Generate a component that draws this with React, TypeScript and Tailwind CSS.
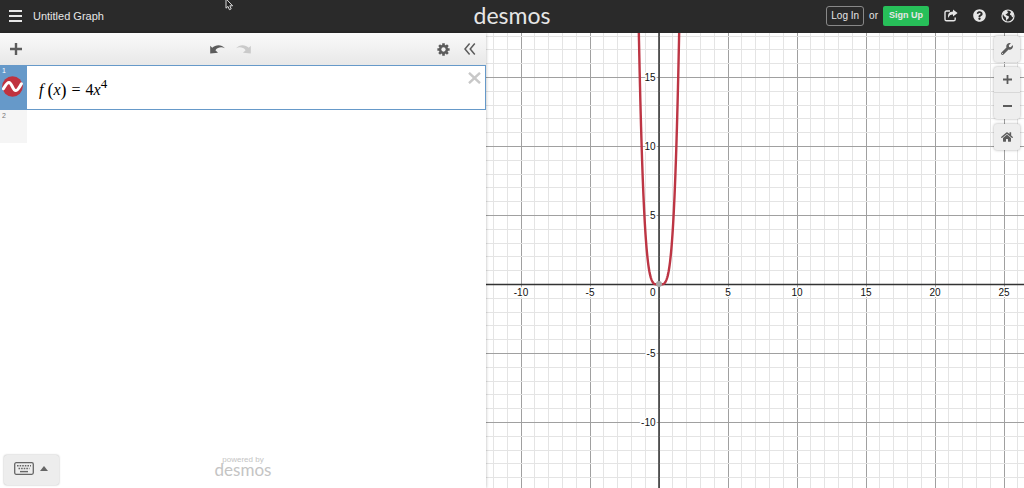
import type { ReactNode } from "react";
import { FaHome, FaQuestionCircle, FaWrench } from "react-icons/fa";

const UNIT = 13.8;
const VIEW = { width: 538, height: 455, originX: 172.5, originY: 251 };

const toX = (x: number) => VIEW.originX + x * UNIT;
const toY = (y: number) => VIEW.originY - y * UNIT;

function range(from: number, to: number) {
  return Array.from({ length: to - from + 1 }, (_, i) => from + i);
}

const COLUMNS = range(-12, 26);
const ROWS = range(-14, 18);
const X_LABELS = [-10, -5, 5, 10, 15, 20, 25];
const Y_LABELS = [15, 10, 5, -5, -10];

const CURVE = range(-60, 60)
  .map((i) => {
    const x = i / 40;
    return `${toX(x).toFixed(2)},${toY(4 * x ** 4).toFixed(2)}`;
  })
  .join(" ");

function MenuIcon() {
  return (
    <svg width="14" height="12" viewBox="0 0 14 12" fill="currentColor" aria-hidden="true">
      <rect y="0" width="13" height="2" />
      <rect y="5" width="13" height="2" />
      <rect y="10" width="13" height="2" />
    </svg>
  );
}

function ShareIcon() {
  return (
    <svg width="14" height="13" viewBox="0 0 14 13" aria-hidden="true">
      <path
        d="M6 2H2.6Q1 2 1 3.6v6.6q0 1.6 1.6 1.6h7q1.6 0 1.6-1.6V8.4"
        fill="none"
        stroke="currentColor"
        strokeWidth="1.4"
      />
      <path d="M9 .4 13.6 4 9 7.6V5.4C6.6 5.3 5.2 6.2 4.4 9 3.2 5 5.4 2.7 9 2.6Z" fill="currentColor" />
    </svg>
  );
}

function GlobeIcon() {
  return (
    <svg width="14" height="14" viewBox="0 0 14 14" aria-hidden="true">
      <circle cx="7" cy="7" r="6" fill="none" stroke="currentColor" strokeWidth="1.2" />
      <path
        d="M2 3.6 4.6 1.4 6.8 1.8 6.2 3 7.4 3.6 5.8 4.8 4.4 5.8 5.8 6.6 8 7.6 7.6 9.2 6.2 10.4 5.8 12.2 5 10.2 4.8 8.4 3 7 2 5.2Z M9.2 1.6 11.4 3 12.6 5.4 12.4 7.6 11.2 8.4 10.4 6.6 9 5.8 9.2 4.2 10 3.4Z"
        fill="currentColor"
      />
    </svg>
  );
}

function PlusIcon({ size }: { size: number }) {
  return (
    <svg width={size} height={size} viewBox="0 0 12 12" aria-hidden="true">
      <path d="M6 0v12M0 6h12" stroke="currentColor" strokeWidth="2.4" />
    </svg>
  );
}

function UndoIcon({ flipped = false }: { flipped?: boolean }) {
  return (
    <svg
      width="15"
      height="9"
      viewBox="0 0 15 9"
      fill="currentColor"
      className={flipped ? "-scale-x-100" : ""}
      aria-hidden="true"
    >
      <path d="M.2.8 2.2 2.8C5.6-.6 11.6-.8 14.9 3.2 11.4 1.6 7.8 2.2 5.4 5.2L8 7.8.2 8.6Z" />
    </svg>
  );
}

function GearIcon() {
  return (
    <svg width="13" height="13" viewBox="0 0 14 14" aria-hidden="true">
      <g stroke="currentColor" strokeWidth="2.8">
        <path d="M7 .4v13.2M.4 7h13.2M2.3 2.3l9.4 9.4M11.7 2.3l-9.4 9.4" />
      </g>
      <circle cx="7" cy="7" r="5" fill="currentColor" />
      <circle cx="7" cy="7" r="2.3" fill="#f2f2f2" />
    </svg>
  );
}

function CollapseIcon() {
  return (
    <svg width="12" height="12" viewBox="0 0 12 12" aria-hidden="true">
      <path
        d="M5.6.6 1 6l4.6 5.4M10.8.6 6.2 6l4.6 5.4"
        fill="none"
        stroke="currentColor"
        strokeWidth="1.5"
      />
    </svg>
  );
}

function CurveIcon() {
  return (
    <svg width="21" height="21" viewBox="0 0 21 21" aria-hidden="true">
      <circle cx="10.5" cy="10.5" r="10.3" fill="#c0323f" />
      <path
        d="M1.4 12.8C3.2 9.8 4.8 6.4 7 6.4 9.6 6.6 11 14.6 13.6 14.6 15.8 14.6 17.4 11 19.4 7.8"
        fill="none"
        stroke="#fff"
        strokeWidth="3"
        strokeLinecap="round"
      />
    </svg>
  );
}

function KeyboardIcon() {
  return (
    <svg width="20" height="13" viewBox="0 0 20 13" aria-hidden="true">
      <rect x=".7" y=".7" width="18.6" height="11.6" rx="1.5" fill="none" stroke="currentColor" strokeWidth="1.3" />
      <path
        d="M3 3.8h14M4.5 6.5h11"
        stroke="currentColor"
        strokeWidth="1.5"
        strokeDasharray="1.6 1"
      />
      <path d="M6 9.6h8" stroke="currentColor" strokeWidth="1.4" />
    </svg>
  );
}

function Pointer() {
  return (
    <svg
      width="9"
      height="13"
      viewBox="0 0 9 13"
      className="pointer-events-none absolute -top-[2px] left-[225px]"
      aria-hidden="true"
    >
      <path
        d="M1 .8v9.4l2-1.8 1.4 3.3 1.8-.8-1.4-3.1h2.8Z"
        fill="#222"
        stroke="#ddd"
        strokeWidth="1"
      />
    </svg>
  );
}

function Header() {
  return (
    <header className="relative flex h-[33px] shrink-0 items-center justify-between bg-[#2a2a2a] pr-[9px] pb-[2px] pl-[9px] text-[#e6e6e6]">
      <div className="flex flex-1 items-center gap-[10px]">
        <button type="button" aria-label="Open menu">
          <MenuIcon />
        </button>
        <span className="text-[11px] leading-4">Untitled Graph</span>
      </div>
      <a href="#home" className="pb-[2px] font-[Lato,sans-serif] text-[23px] leading-6">
        desmos
      </a>
      <div className="flex flex-1 items-center justify-end text-[10px]">
        <button type="button" className="h-5 rounded-[3px] border border-[#888] px-1">
          Log In
        </button>
        <span className="mx-[5px]">or</span>
        <button type="button" className="h-5 rounded-[2px] bg-[#27bf59] px-[6px] text-[9px] font-bold">
          Sign Up
        </button>
        <div className="ml-[15px] flex items-center gap-[15px]">
          <button type="button" aria-label="Share graph">
            <ShareIcon />
          </button>
          <button type="button" aria-label="Help">
            <FaQuestionCircle size={13} />
          </button>
          <button type="button" aria-label="Language">
            <GlobeIcon />
          </button>
        </div>
      </div>
      <Pointer />
    </header>
  );
}

function Toolbar() {
  return (
    <div className="flex h-8 shrink-0 items-center bg-linear-to-b from-[#fafafa] to-[#e8e8e8] px-[10px] text-[#5c5c5c]">
      <div className="flex flex-1">
        <button type="button" aria-label="Add item">
          <PlusIcon size={12} />
        </button>
      </div>
      <div className="mr-[26px] flex items-center gap-[11px]">
        <button type="button" aria-label="Undo">
          <UndoIcon />
        </button>
        <button type="button" aria-label="Redo" disabled className="text-[#cacaca]">
          <UndoIcon flipped />
        </button>
      </div>
      <div className="flex flex-1 items-center justify-end gap-[14px]">
        <button type="button" aria-label="Edit list">
          <GearIcon />
        </button>
        <button type="button" aria-label="Hide list">
          <CollapseIcon />
        </button>
      </div>
    </div>
  );
}

function Expressions() {
  return (
    <ol className="flex-1">
      <li className="flex h-[45px] bg-[#6699c9] py-px pr-px">
        <div className="w-[27px] shrink-0 pl-[2px] text-[7px] leading-[10px] text-white">
          <span className="block">1</span>
          <button type="button" aria-label="Hide curve" className="block">
            <CurveIcon />
          </button>
        </div>
        <div
          role="textbox"
          tabIndex={0}
          aria-label="Expression 1"
          className="flex flex-1 items-center bg-white pt-1 pl-3 font-['Liberation_Serif',serif] text-[16px] leading-5 text-black"
        >
          <i>f</i>
          <span className="ml-1 text-[18px]">(</span>
          <i>x</i>
          <span className="text-[18px]">)</span>
          <span className="mx-[5px]">=</span>
          <span>4</span>
          <i>x</i>
          <sup className="-top-[6px] text-[13px]">4</sup>
        </div>
        <button
          type="button"
          aria-label="Delete expression 1"
          className="flex bg-white pt-[6px] pr-1 text-[#c8c8c8]"
        >
          <svg width="13" height="12" viewBox="0 0 13 12" aria-hidden="true">
            <path d="M1 .8l11 10.4M12 .8 1 11.2" stroke="currentColor" strokeWidth="2.4" />
          </svg>
        </button>
      </li>
      <li className="flex h-[33px]">
        <div className="w-[27px] bg-[#f5f5f5] pl-[2px] text-[7px] leading-[11px] text-[#777]">2</div>
      </li>
    </ol>
  );
}

function ExpressionPanel() {
  return (
    <section
      className="relative z-10 flex w-[486px] shrink-0 flex-col bg-white shadow-[0_0_3px_rgba(0,0,0,0.3)]"
      aria-label="Expressions"
    >
      <Toolbar />
      <Expressions />
      <footer className="grid grid-cols-3 items-end pb-[3px]">
        <button
          type="button"
          aria-label="Show keypad"
          className="ml-1 flex h-[30px] w-[55px] items-center justify-center gap-[6px] rounded-[3px] bg-[#ededed] pr-[2px] pb-1 text-[#666] shadow-[0_0_2px_rgba(0,0,0,0.35)]"
        >
          <KeyboardIcon />
          <svg width="8" height="5" viewBox="0 0 8 5" fill="currentColor" aria-hidden="true">
            <path d="M4 0l4 5H0Z" />
          </svg>
        </button>
        <div className="flex flex-col items-center pb-[9px] text-[#c4c4c4]">
          <span className="text-[8px] leading-[9px]">powered by</span>
          <span className="font-[Lato,sans-serif] text-[17px] leading-3">desmos</span>
        </div>
      </footer>
    </section>
  );
}

function Graph() {
  return (
    <svg
      viewBox={`0 0 ${VIEW.width} ${VIEW.height}`}
      preserveAspectRatio="xMidYMid slice"
      className="block h-full w-full"
      role="img"
      aria-label="Graph of f(x) = 4x^4"
    >
      <g shapeRendering="crispEdges">
        {COLUMNS.map((c) => (
          <rect
            key={c}
            x={Math.round(toX(c))}
            width="1"
            height={VIEW.height}
            fill={c % 5 === 0 ? "#a0a0a0" : "#e4e4e4"}
          />
        ))}
        {ROWS.map((r) => (
          <rect
            key={r}
            y={Math.round(toY(r))}
            width={VIEW.width}
            height="1"
            fill={r % 5 === 0 ? "#a0a0a0" : "#e4e4e4"}
          />
        ))}
      </g>
      <path
        d={`M${VIEW.originX + 0.5} 0V${VIEW.height}M0 ${VIEW.originY + 0.5}H${VIEW.width}`}
        stroke="#333"
        strokeWidth="1.5"
      />
      <polyline points={CURVE} fill="none" stroke="#bd3544" strokeWidth="2.4" transform="translate(.5 .5)" />
      <circle cx={VIEW.originX + 0.5} cy={VIEW.originY} r="3" fill="#a6a6a6" />
      <g
        fontSize="10"
        fill="#111"
        stroke="#fff"
        strokeWidth="3"
        strokeLinejoin="round"
        paintOrder="stroke"
      >
        {X_LABELS.map((n) => (
          <text key={n} x={Math.round(toX(n))} y={VIEW.originY + 12} textAnchor="middle">
            {n}
          </text>
        ))}
        <text x={VIEW.originX - 3} y={VIEW.originY + 12} textAnchor="end">
          0
        </text>
        {Y_LABELS.map((n) => (
          <text key={n} x={VIEW.originX - 3} y={Math.round(toY(n)) + 4} textAnchor="end">
            {n}
          </text>
        ))}
      </g>
    </svg>
  );
}

function ToolButton({ label, children }: { label: string; children: ReactNode }) {
  return (
    <button type="button" aria-label={label} className="flex h-[26px] w-[26px] items-center justify-center">
      {children}
    </button>
  );
}

function GraphControls() {
  return (
    <div className="absolute top-[3px] right-1 flex flex-col gap-[5px] text-[#5c5c5c]">
      <div className="rounded-[3px] bg-[#eee] shadow-[0_0_3px_rgba(0,0,0,0.35)]">
        <ToolButton label="Graph settings">
          <FaWrench size={12} />
        </ToolButton>
      </div>
      <div className="divide-y divide-[#d8d8d8] rounded-[3px] bg-[#eee] shadow-[0_0_3px_rgba(0,0,0,0.35)]">
        <ToolButton label="Zoom in">
          <PlusIcon size={9} />
        </ToolButton>
        <ToolButton label="Zoom out">
          <svg width="9" height="2" viewBox="0 0 9 2" fill="currentColor" aria-hidden="true">
            <rect width="9" height="2" />
          </svg>
        </ToolButton>
      </div>
      <div className="rounded-[3px] bg-[#eee] shadow-[0_0_3px_rgba(0,0,0,0.35)]">
        <ToolButton label="Default view">
          <FaHome size={12} />
        </ToolButton>
      </div>
    </div>
  );
}

export default function App() {
  return (
    <div className="flex h-screen flex-col overflow-hidden bg-white font-['Liberation_Sans',Arial,sans-serif]">
      <Header />
      <main className="flex min-h-0 flex-1">
        <ExpressionPanel />
        <section className="relative min-w-0 flex-1" aria-label="Graph">
          <Graph />
          <GraphControls />
        </section>
      </main>
    </div>
  );
}
